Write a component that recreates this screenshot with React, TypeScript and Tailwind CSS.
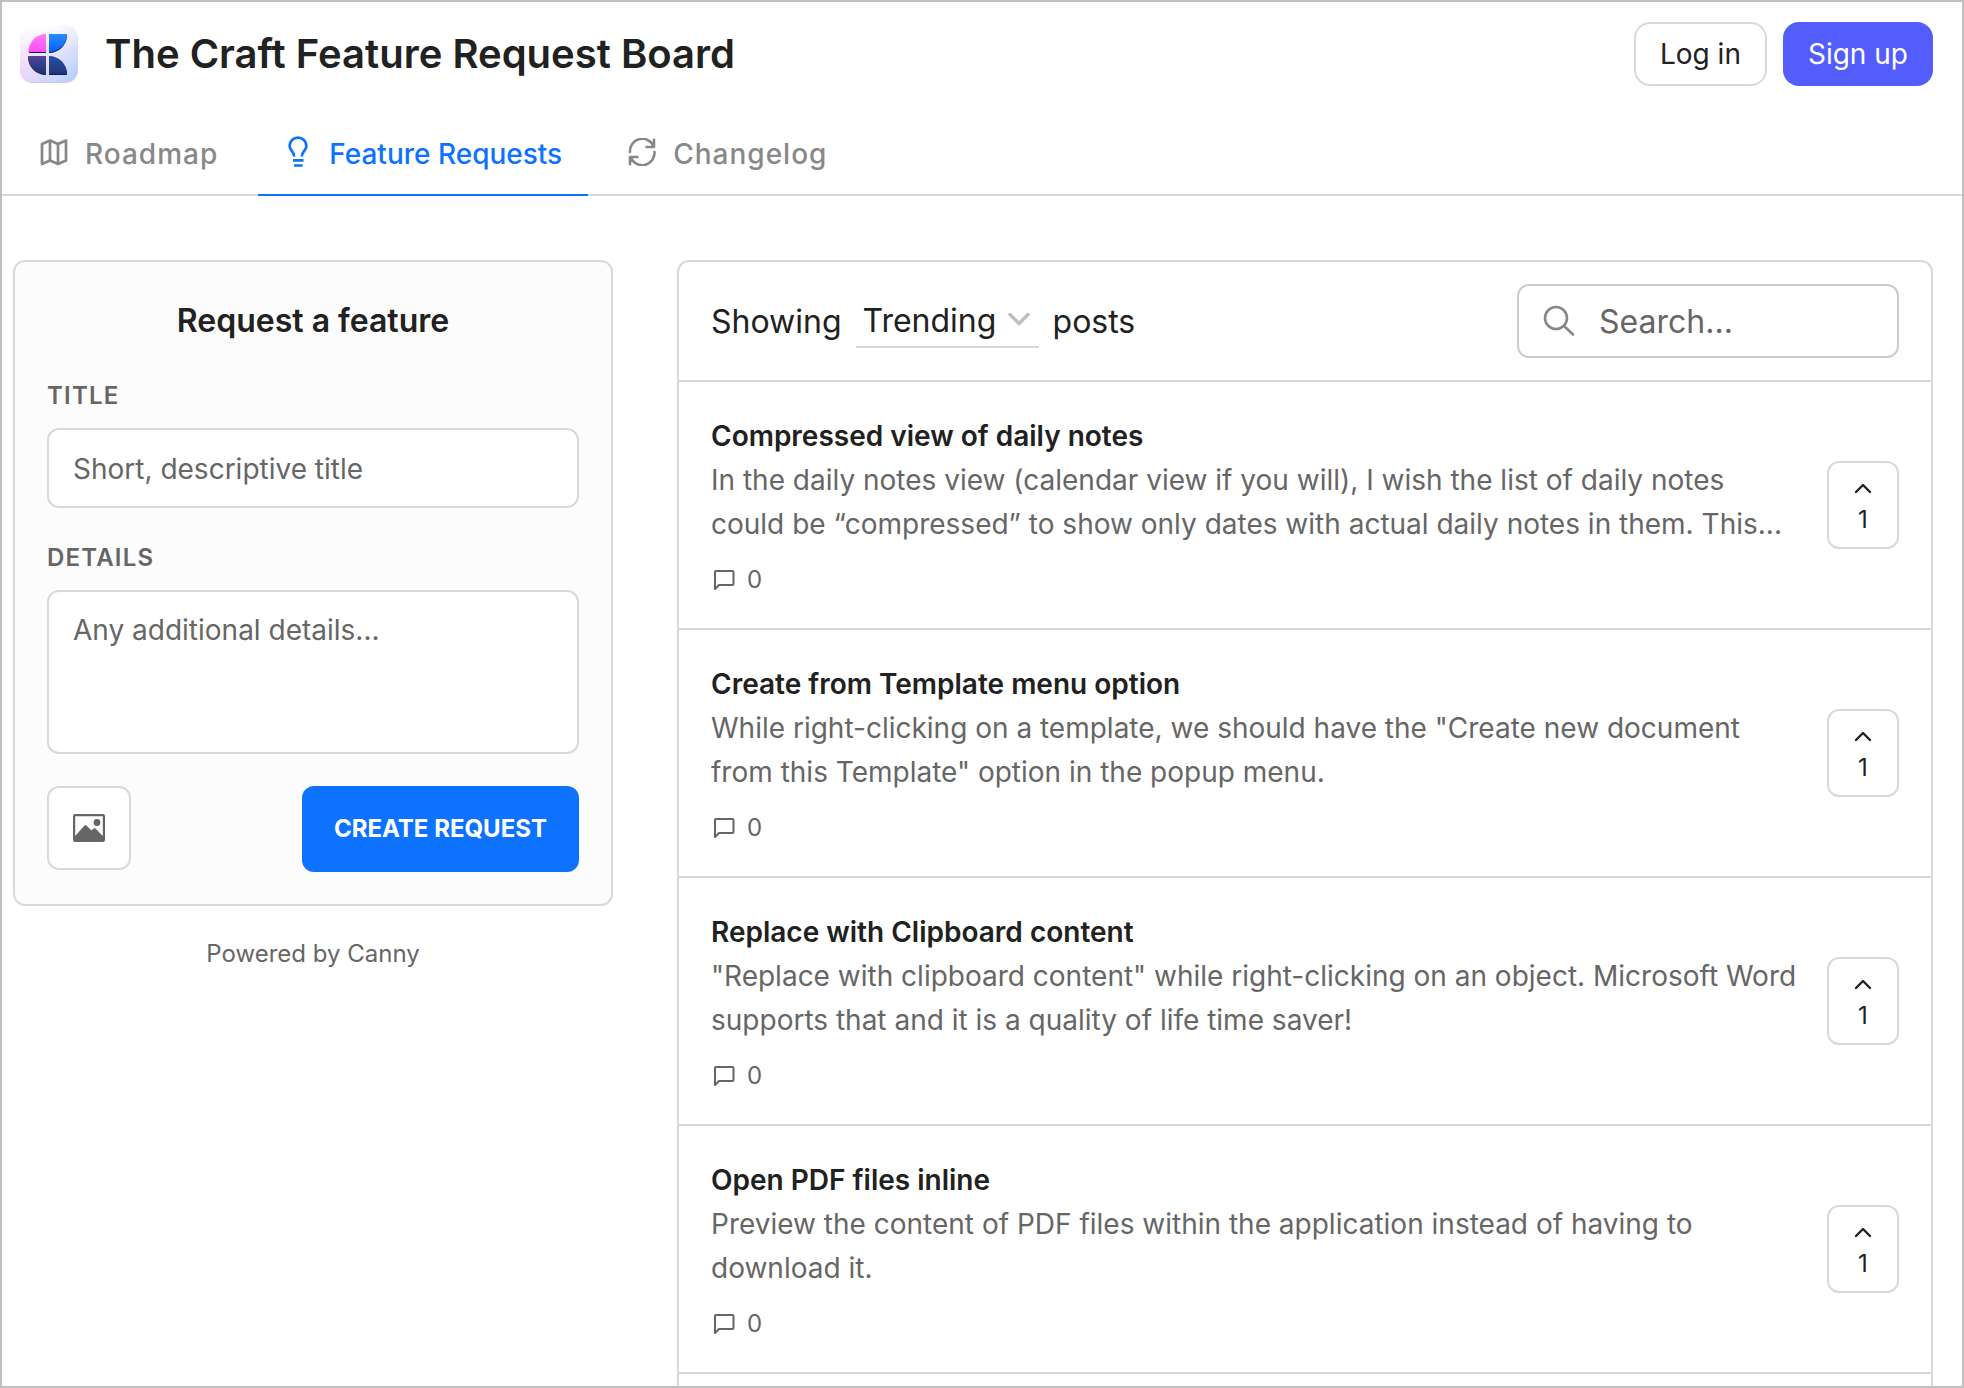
import React from "react";

const posts = [
  {
    title: "Compressed view of daily notes",
    body: "In the daily notes view (calendar view if you will), I wish the list of daily notes could be “compressed” to show only dates with actual daily notes in them. This...",
  },
  {
    title: "Create from Template menu option",
    body: 'While right-clicking on a template, we should have the "Create new document from this Template" option in the popup menu.',
  },
  {
    title: "Replace with Clipboard content",
    body: '"Replace with clipboard content" while right-clicking on an object. Microsoft Word supports that and it is a quality of life time saver!',
  },
  {
    title: "Open PDF files inline",
    body: "Preview the content of PDF files within the application instead of having to download it.",
  },
];

function Logo() {
  return (
    <svg viewBox="0 0 58 58" className="size-[58px] shrink-0" aria-hidden="true">
      <defs>
        <linearGradient id="base" x1="0" y1="0" x2="0" y2="1">
          <stop offset="0" stopColor="#ffffff" />
          <stop offset="1" stopColor="#f0ccfa" />
        </linearGradient>
        <linearGradient id="tint" x1="0.1" y1="0.1" x2="1" y2="1">
          <stop offset="0.15" stopColor="#e4edff" stopOpacity="0" />
          <stop offset="0.95" stopColor="#b2cfff" />
        </linearGradient>
        <linearGradient id="pink" x1="0" y1="0" x2="0" y2="1">
          <stop offset="0" stopColor="#ff7dfa" />
          <stop offset="1" stopColor="#ff4df0" />
        </linearGradient>
        <linearGradient id="blue" x1="0" y1="0" x2="0" y2="1">
          <stop offset="0" stopColor="#2a8cff" />
          <stop offset="1" stopColor="#0062ff" />
        </linearGradient>
        <linearGradient id="violet" x1="0" y1="0" x2="0" y2="1">
          <stop offset="0" stopColor="#5a4298" />
          <stop offset="0.5" stopColor="#2f3f86" />
          <stop offset="1" stopColor="#20336f" />
        </linearGradient>
        <linearGradient id="navy" x1="0" y1="0" x2="0" y2="1">
          <stop offset="0" stopColor="#2452a8" />
          <stop offset="1" stopColor="#243378" />
        </linearGradient>
      </defs>
      <rect y="1" width="58" height="57" rx="13" fill="#c9cbdc" />
      <rect width="58" height="57" rx="13" fill="url(#base)" />
      <rect width="58" height="57" rx="13" fill="url(#tint)" />
      <g fill="#14184e">
        <path d="M26 10V28H9C9 18 16 10 26 10Z" />
        <path d="M29 10H47C47 20 39 28 29 28Z" />
        <path d="M8 32H26V50C16 50 8 42 8 32Z" />
        <path d="M29 32C39 32 47 40 47 50H29Z" />
      </g>
      <path d="M26 9V27H8.500C8.500 17 16 9 26 9Z" fill="url(#pink)" />
      <path d="M29 9H47C47 19 39 27 29 27Z" fill="url(#blue)" />
      <path d="M8 31H26V49C16 49 8 41 8 31Z" fill="url(#violet)" />
      <path d="M29 31C39 31 47 39 47 49H29Z" fill="url(#navy)" />
    </svg>
  );
}

function MapIcon() {
  return (
    <svg viewBox="0 0 28 28" className="mb-1 size-7" fill="none" stroke="currentColor" strokeWidth="2.700" strokeLinejoin="round" aria-hidden="true">
      <path d="M2 6 10 2.500 18 6 26 2.500V22.500L18 26 10 22.500 2 26Z" />
      <path d="M10 2.500V22.500M18 6V26" />
    </svg>
  );
}

function BulbIcon() {
  return (
    <svg viewBox="0 0 28 32" className="mb-1 h-8 w-7" fill="none" stroke="currentColor" strokeWidth="2.700" strokeLinejoin="round" aria-hidden="true">
      <path strokeLinecap="round" d="M10 19.500C10 15.500 5.600 14.500 5.600 10A8.400 8.400 0 0 1 22.400 10C22.400 14.500 18 15.500 18 19.500" />
      <path d="M9 24.300H19.500M10 29.500H18.500" />
    </svg>
  );
}

function RefreshIcon() {
  return (
    <svg viewBox="0 0 28 28" className="mb-1 size-7" fill="none" stroke="currentColor" strokeWidth="2.600" strokeLinecap="round" strokeLinejoin="round" aria-hidden="true">
      <path d="M2 14A12.300 12.300 0 0 1 25.800 8.800M26 1.800V9H18.500" />
      <path d="M26.500 14A12.300 12.300 0 0 1 2.700 19.200M2 26.200V19H9.500" />
    </svg>
  );
}

function CommentIcon() {
  return (
    <svg viewBox="0 0 22 22" className="ml-0.5 size-[22px]" fill="none" stroke="currentColor" strokeWidth="2" strokeLinejoin="round" aria-hidden="true">
      <path d="M2 20V3Q2 2 3 2H19.500Q20.500 2 20.500 3V15Q20.500 16 19.500 16H6Z" />
    </svg>
  );
}

function ImageIcon() {
  return (
    <svg viewBox="0 0 32 28" className="h-7 w-8" aria-hidden="true">
      <path
        fill="#666"
        fillRule="evenodd"
        d="M2 0H30Q32 0 32 2V26Q32 28 30 28H2Q0 28 0 26V2Q0 0 2 0ZM2.200 2.200V22L11.500 11.500Q12.500 10.500 13.500 11.500L18.500 16.500 20.500 14.500Q21.500 13.800 22.500 14.500L29.800 22V2.200Z"
      />
      <circle cx="24" cy="8.500" r="3.400" fill="#666" />
    </svg>
  );
}

export default function App() {
  return (
    <div className="flex min-h-screen flex-col border-2 border-[#bfbfbf] bg-white font-['Inter',sans-serif] text-[#212121]">
      <header className="flex items-center gap-[27px] pt-5 pr-[29px] pl-[18px]">
        <Logo />
        <h1 className="flex-1 text-[40px] leading-[64px] font-semibold">The Craft Feature Request Board</h1>
        <div className="flex gap-4">
          <button className="h-16 rounded-2xl border-2 border-[#d9d9d9] px-6 text-[28px]">Log in</button>
          <button className="h-16 rounded-2xl bg-[#525dfb] px-[25px] text-[28px] text-white">Sign up</button>
        </div>
      </header>

      <nav className="mt-6 flex h-[86px] gap-[14px] border-b-2 border-[#d9d9d9] pl-3 text-[28px] font-medium text-[#888]">
        <a href="#roadmap" className="flex items-center gap-[17px] px-[26px] pt-1 tracking-[1px]">
          <MapIcon />
          Roadmap
        </a>
        <a href="#requests" className="-mb-[2px] flex items-center gap-[17px] border-b-2 border-[#0d73ff] px-[26px] pt-1 text-[#0d73ff]">
          <BulbIcon />
          Feature Requests
        </a>
        <a href="#changelog" className="flex items-center gap-[17px] px-[26px] pt-1 tracking-[1px]">
          <RefreshIcon />
          Changelog
        </a>
      </nav>

      <main className="flex flex-1 gap-16 pt-16 pr-[29px] pl-[11px]">
        <aside className="w-[600px] shrink-0">
          <form className="flex flex-col rounded-xl border-2 border-[#d9d9d9] bg-[#fcfcfc] p-8">
            <h2 className="text-center text-[32px] leading-[54px] font-semibold">Request a feature</h2>
            <label htmlFor="title" className="mt-[30px] text-[24px] leading-9 font-semibold tracking-wider text-[#666]">
              TITLE
            </label>
            <input
              id="title"
              placeholder="Short, descriptive title"
              className="mt-[14px] h-20 rounded-xl border-2 border-[#d9d9d9] bg-white px-6 pt-0.5 text-[28px] placeholder:text-[#666]"
            />
            <label htmlFor="details" className="mt-8 text-[24px] leading-9 font-semibold tracking-wider text-[#666]">
              DETAILS
            </label>
            <textarea
              id="details"
              placeholder="Any additional details..."
              className="mt-[14px] h-[164px] resize-none rounded-xl border-2 border-[#d9d9d9] bg-white px-6 py-4 text-[28px] leading-[44px] placeholder:text-[#666]"
            />
            <div className="mt-8 flex items-start justify-between">
              <button type="button" aria-label="Add image" className="flex size-[84px] items-center justify-center rounded-xl border-2 border-[#d9d9d9] bg-white">
                <ImageIcon />
              </button>
              <button type="button" className="h-[86px] rounded-xl bg-[#0d73ff] px-8 text-[24px] font-bold text-white">
                CREATE REQUEST
              </button>
            </div>
          </form>
          <p className="mt-[30px] text-center text-[24px] leading-9 text-[#666]">
            <a href="#canny">Powered by Canny</a>
          </p>
        </aside>

        <section className="flex-1 rounded-t-xl border-2 border-b-0 border-[#d9d9d9]">
          <div className="flex h-[120px] items-center justify-between border-b-2 border-[#d9d9d9] px-8 text-[32px]">
            <div className="flex items-center pt-0.5">
              <label htmlFor="sort">Showing</label>
              <div className="relative mx-[14px] border-b-2 border-[#d9d9d9]">
                <select id="sort" defaultValue="Trending" className="block h-[50px] w-[183px] appearance-none bg-transparent pl-[7px]">
                  <option>Trending</option>
                  <option>Top</option>
                  <option>New</option>
                </select>
                <svg viewBox="0 0 24 14" className="pointer-events-none absolute top-4 right-2 h-[14px] w-6" fill="none" stroke="#bfbfbf" strokeWidth="3.500" strokeLinecap="round" strokeLinejoin="round" aria-hidden="true">
                  <path d="M3 2.500 12 11.500 21 2.500" />
                </svg>
              </div>
              <span>posts</span>
            </div>
            <label className="flex h-[74px] w-[382px] items-center gap-6 rounded-xl border-2 border-[#ccc] px-6">
              <svg viewBox="0 0 32 32" className="size-8 shrink-0" fill="none" stroke="#888" strokeWidth="2.600" strokeLinecap="round" aria-hidden="true">
                <circle cx="13" cy="13" r="11" />
                <path d="M21 21 30 29.500" />
              </svg>
              <input aria-label="Search" placeholder="Search..." className="w-full min-w-0 pt-0.5 placeholder:text-[#666]" />
            </label>
          </div>

          {posts.map((post) => (
            <article key={post.title} className="flex items-center gap-6 border-b-2 border-[#d9d9d9] px-8">
              <div className="flex-1 pt-8 pb-[30px]">
                <h3 className="text-[28px] leading-[44px] font-semibold">
                  <a href="#post">{post.title}</a>
                </h3>
                <p className="text-[28px] leading-[44px] text-[#666]">{post.body}</p>
                <div className="mt-4 flex items-center gap-3 text-[24px] leading-9 text-[#666]">
                  <CommentIcon />
                  <span>0</span>
                </div>
              </div>
              <button aria-label="Upvote" className="flex h-[88px] w-[72px] shrink-0 flex-col items-center justify-center rounded-xl border-2 border-[#d9d9d9] text-[24px] leading-8">
                <svg viewBox="0 0 18 12" className="mt-2 mb-2.5 h-3 w-[18px]" fill="none" stroke="currentColor" strokeWidth="2.400" strokeLinecap="round" strokeLinejoin="round" aria-hidden="true">
                  <path d="M2 10 9 3 16 10" />
                </svg>
                1
              </button>
            </article>
          ))}
        </section>
      </main>
    </div>
  );
}
